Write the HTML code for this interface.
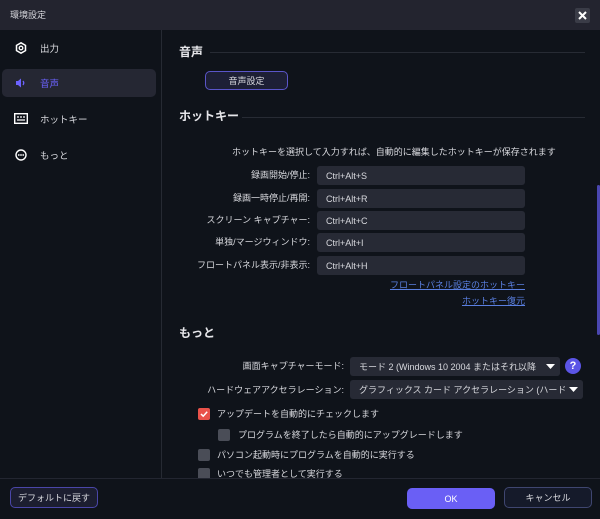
<!DOCTYPE html>
<html><head><meta charset="utf-8"><style>
*{box-sizing:border-box;margin:0;padding:0}
body{width:600px;height:519px;overflow:hidden;background:#0f131a;font-family:"Liberation Sans","Noto Sans CJK JP",sans-serif;color:#d8d9de;font-size:9px;position:relative;white-space:nowrap}
.a{position:absolute}
.title{left:0;top:0;width:600px;height:30px;background:#23242f;}
.side{left:0;top:30px;width:162px;height:448px;border-right:1px solid #262a33}
.nav{position:absolute;left:2px;width:154px;height:28px;border-radius:5px;font-size:9.5px;display:flex;align-items:center}
.nav span{position:absolute;left:38px}
.h{font-size:12px;color:#e6e6ea;font-weight:bold;line-height:14px}
.line{height:1px;background:#272b34}
.lbl{right:290px;width:160px;text-align:right;font-size:9px;line-height:12px}
.inp{left:317px;width:208px;height:19px;background:#272a35;border-radius:3px;padding-left:9px;display:flex;align-items:center;font-size:9px;overflow:hidden}
.cb{width:12px;height:12px;background:#4a4d57;border-radius:2px}
.lnk{color:#5a7fe0;text-decoration:underline;right:75px;font-size:9px;line-height:12px}
.btn{height:21px;border-radius:5px;display:flex;align-items:center;justify-content:center;font-size:9px}
.t{line-height:12px}
</style></head><body>
<div class="a title"><div class="a" style="left:10px;top:9px;font-size:9px;line-height:12px">環境設定</div>
<div class="a" style="left:575px;top:8px;width:15px;height:15px;background:#3a3c47;border-radius:2px"><svg width="15" height="15" viewBox="0 0 15 15"><path d="M4 4L11 11M11 4L4 11" stroke="#fff" stroke-width="2"/></svg></div></div>
<div class="a side">
<div class="nav" style="top:4px"><svg class="a" style="left:13px;top:8px" width="12" height="12" viewBox="0 0 12 12"><path d="M6 0.8 10.5 3.4V8.6L6 11.2 1.5 8.6V3.4Z" fill="none" stroke="#fff" stroke-width="1.5"/><circle cx="6" cy="6" r="1.8" fill="none" stroke="#fff" stroke-width="1.3"/></svg><span>出力</span></div>
<div class="nav" style="top:39px;background:#252733;color:#6c63ff"><svg class="a" style="left:13px;top:8px" width="12" height="12" viewBox="0 0 12 12"><path d="M1 4H3L6 1.5V10.5L3 8H1Z" fill="#6c63ff"/><path d="M8 4Q9.5 6 8 8" stroke="#6c63ff" fill="none" stroke-width="1.3"/></svg><span>音声</span></div>
<div class="nav" style="top:75px"><svg class="a" style="left:12px;top:8px" width="14" height="11" viewBox="0 0 14 11"><rect x="0.7" y="0.7" width="12.6" height="9.6" fill="none" stroke="#fff" stroke-width="1.4"/><path d="M3 4h2M6 4h2M9 4h2M3 7h8" stroke="#fff" stroke-width="1.2"/></svg><span>ホットキー</span></div>
<div class="nav" style="top:111px"><svg class="a" style="left:13px;top:8px" width="12" height="12" viewBox="0 0 12 12"><circle cx="6" cy="6" r="5" fill="none" stroke="#fff" stroke-width="1.4"/><circle cx="3.8" cy="6" r=".9" fill="#fff"/><circle cx="6" cy="6" r=".9" fill="#fff"/><circle cx="8.2" cy="6" r=".9" fill="#fff"/></svg><span>もっと</span></div>
</div>
<div class="a h" style="left:179px;top:45px">音声</div>
<div class="a line" style="left:210px;top:52px;width:375px"></div>
<div class="a btn" style="left:205px;top:71px;width:83px;height:19px;border:1px solid #5a55c8;background:#1d1f35">音声設定</div>
<div class="a h" style="left:179px;top:109px">ホットキー</div>
<div class="a line" style="left:242px;top:117px;width:343px"></div>
<div class="a t" style="left:232px;top:146px">ホットキーを選択して入力すれば、自動的に編集したホットキーが保存されます</div>
<div class="a lbl" style="top:169px">録画開始/停止:</div><div class="a inp" style="top:166px">Ctrl+Alt+S</div>
<div class="a lbl" style="top:192px">録画一時停止/再開:</div><div class="a inp" style="top:189px">Ctrl+Alt+R</div>
<div class="a lbl" style="top:214px">スクリーン キャプチャー:</div><div class="a inp" style="top:211px">Ctrl+Alt+C</div>
<div class="a lbl" style="top:236px">単独/マージウィンドウ:</div><div class="a inp" style="top:233px">Ctrl+Alt+I</div>
<div class="a lbl" style="top:259px">フロートパネル表示/非表示:</div><div class="a inp" style="top:256px">Ctrl+Alt+H</div>
<div class="a lnk" style="top:279px">フロートパネル設定のホットキー</div>
<div class="a lnk" style="top:295px">ホットキー復元</div>
<div class="a h" style="left:179px;top:326px">もっと</div>
<div class="a lbl" style="top:360px;right:256px;width:200px">画面キャプチャーモード:</div>
<div class="a inp" style="left:350px;top:357px;width:210px;height:19px">モード 2 (Windows 10 2004 またはそれ以降<span class="a" style="right:0;top:0;width:18px;height:19px;background:#272a35"><svg style="margin:7px 0 0 4px" width="9" height="5" viewBox="0 0 9 5"><path d="M0 0H9L4.5 5Z" fill="#fff"/></svg></span></div>
<div class="a" style="left:565px;top:358px;width:16px;height:16px;border-radius:50%;background:#5b55e6;color:#fff;font-weight:bold;text-align:center;line-height:16px;font-size:11px;font-family:'Liberation Sans'">?</div>
<div class="a lbl" style="top:384px;right:256px;width:200px">ハードウェアアクセラレーション:</div>
<div class="a inp" style="left:350px;top:380px;width:233px;height:19px">グラフィックス カード アクセラレーション (ハードウェア :<span class="a" style="right:0;top:0;width:18px;height:19px;background:#272a35"><svg style="margin:7px 0 0 4px" width="9" height="5" viewBox="0 0 9 5"><path d="M0 0H9L4.5 5Z" fill="#fff"/></svg></span></div>
<div class="a cb" style="left:198px;top:408px;background:#e9524a"><svg width="12" height="12" viewBox="0 0 12 12"><path d="M3 6L5.2 8.2 9.2 3.8" stroke="#fff" fill="none" stroke-width="1.5"/></svg></div>
<div class="a t" style="left:217px;top:408px">アップデートを自動的にチェックします</div>
<div class="a cb" style="left:218px;top:429px"></div>
<div class="a t" style="left:238px;top:429px">プログラムを終了したら自動的にアップグレードします</div>
<div class="a cb" style="left:198px;top:449px"></div>
<div class="a t" style="left:217px;top:449px">パソコン起動時にプログラムを自動的に実行する</div>
<div class="a" style="left:0;top:466px;width:596px;height:12px;overflow:hidden"><div class="a cb" style="left:198px;top:2px"></div><div class="a t" style="left:217px;top:2px">いつでも管理者として実行する</div></div>
<div class="a" style="left:597px;top:185px;width:3px;height:150px;background:#4a47b0;border-radius:2px"></div>
<div class="a line" style="left:0;top:478px;width:600px;background:#232631"></div>
<div class="a btn" style="left:10px;top:487px;width:88px;border:1px solid #4a46a8;background:#1c1e30">デフォルトに戻す</div>
<div class="a btn" style="left:407px;top:488px;width:88px;background:#6a5ff5;color:#fff">OK</div>
<div class="a btn" style="left:504px;top:487px;width:88px;border:1px solid #3f4670;background:#151a2a">キャンセル</div>
</body></html>
